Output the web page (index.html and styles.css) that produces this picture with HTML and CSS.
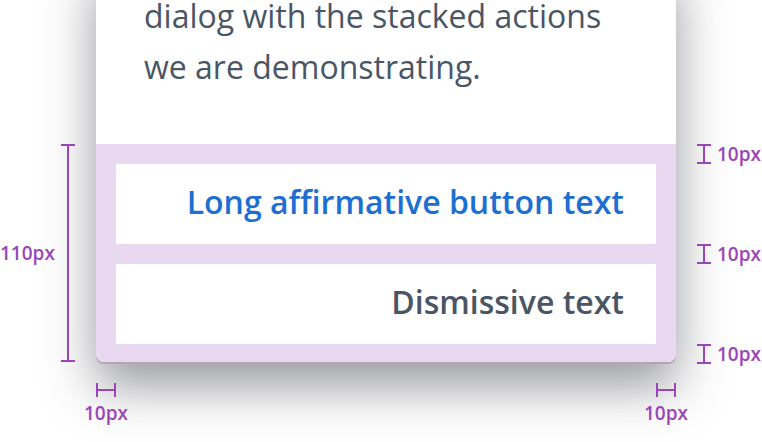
FILE: index.html
```html
<!DOCTYPE html>
<html>
<head>
<meta charset="utf-8">
<link rel="stylesheet" href="styles.css">
</head>
<body>
<div class="stage">
  <div class="dialog">
    <div class="body">
      <p class="message">dialog with the stacked actions<br>we are demonstrating.</p>
    </div>
    <div class="footer">
      <button class="action affirm">Long affirmative button text</button>
      <button class="action dismiss">Dismissive text</button>
    </div>
  </div>

  <div class="note note-total">
    <span class="note-label">110px</span>
    <span class="vbar tall"></span>
  </div>
  <div class="note note-right n1"><span class="vbar short"></span><span class="note-label">10px</span></div>
  <div class="note note-right n2"><span class="vbar short"></span><span class="note-label">10px</span></div>
  <div class="note note-right n3"><span class="vbar short"></span><span class="note-label">10px</span></div>
  <div class="note note-bottom left"><span class="hbar"></span><span class="note-label">10px</span></div>
  <div class="note note-bottom right"><span class="hbar"></span><span class="note-label">10px</span></div>
</div>
</body>
</html>
```
FILE: styles.css
```css
html, body {
  margin: 0;
  padding: 0;
  background: #ffffff;
  overflow: hidden;
}
body {
  width: 762px;
  height: 442px;
  font-family: "Open Sans", "Liberation Sans", sans-serif;
}
.stage {
  position: relative;
  display: flow-root;
  width: 762px;
  height: 442px;
  padding-left: 96px;
  box-sizing: border-box;
}
.dialog {
  width: 580px;
  margin-top: -40px;
  background: #ffffff;
  border-radius: 0 0 8px 8px;
  box-shadow: 0 2px 0 #b5a3bd, 0 24px 50px rgba(50, 52, 60, 0.5);
}
.body {
  padding: 30px 48px 52px 48px;
}
.message {
  margin: 0;
  font-size: 32px;
  line-height: 51px;
  color: #4a5666;
  font-weight: 400;
}
.footer {
  background: #e8d9f0;
  padding: 20px 20px 18px;
  display: flex;
  flex-direction: column;
  gap: 20px;
  border-radius: 0 0 8px 8px;
}
.action {
  display: flex;
  align-items: center;
  justify-content: flex-end;
  height: 80px;
  padding: 0 32px 5px 0;
  margin: 0;
  border: 0;
  background: #ffffff;
  font-family: "Open Sans", "Liberation Sans", sans-serif;
  font-size: 32px;
  font-weight: 600;
}
.affirm { color: #1d6fd1; }
.dismiss { color: #4a5565; }

/* annotations */
.note {
  position: absolute;
  color: #9a46b8;
  font-size: 19px;
  font-weight: 600;
  display: flex;
  align-items: center;
}
.note-label { line-height: 20px; }
.vbar {
  display: block;
  width: 2px;
  background: #9a46b8;
  position: relative;
}
.vbar::before, .vbar::after {
  content: "";
  position: absolute;
  left: -6px;
  width: 14px;
  height: 2px;
  background: #9a46b8;
}
.vbar::before { top: 0; }
.vbar::after { bottom: 0; }
.tall { height: 218px; }
.short { height: 20px; }
.note-total {
  left: 0;
  top: 144px;
  gap: 12px;
}
.note-right {
  left: 703px;
  gap: 12px;
}
.n1 { top: 144px; }
.n2 { top: 244px; }
.n3 { top: 344px; }
.note-bottom {
  top: 383px;
  flex-direction: column;
  gap: 12px;
  width: 60px;
}
.note-bottom.left { left: 76px; }
.note-bottom.right { left: 636px; }
.hbar {
  display: block;
  width: 20px;
  height: 2px;
  margin-top: 6px;
  background: #9a46b8;
  position: relative;
}
.hbar::before, .hbar::after {
  content: "";
  position: absolute;
  top: -6px;
  width: 2px;
  height: 14px;
  background: #9a46b8;
}
.hbar::before { left: 0; }
.hbar::after { right: 0; }
```
